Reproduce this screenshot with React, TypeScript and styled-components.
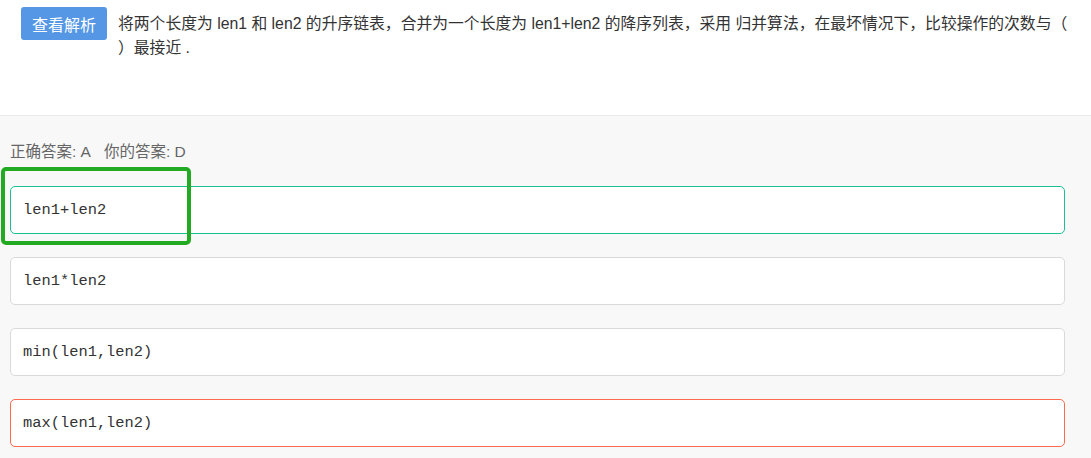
import React from 'react'
import styled, { createGlobalStyle } from 'styled-components'

const GlobalStyle = createGlobalStyle`
  html, body {
    margin: 0;
    padding: 0;
    background: #f8f8f8;
  }
  body {
    font-family: 'Liberation Sans', 'Noto Sans CJK SC', sans-serif;
    color: #333;
  }
`

const Page = styled.div`
  position: relative;
  width: 1091px;
  min-height: 458px;
  background: #f8f8f8;
`

const QuestionHeader = styled.div`
  display: flex;
  align-items: flex-start;
  gap: 11px;
  height: 116px;
  box-sizing: border-box;
  padding: 7px 22px 0 21px;
  background: #fff;
  border-bottom: 1px solid #ebebeb;
`

const AnalysisButton = styled.button`
  flex: none;
  width: 86px;
  height: 33px;
  padding: 0;
  border: none;
  border-radius: 3px;
  background: #5597e5;
  color: #fff;
  font-family: 'Liberation Sans', 'Noto Sans CJK SC', sans-serif;
  font-size: 16px;
  cursor: pointer;
`

const QuestionText = styled.div`
  flex: 1;
  font-size: 15.8px;
  line-height: 24px;
  padding-top: 5px;
  color: #333;
`

const AnswerSection = styled.div`
  display: flex;
  flex-direction: column;
  padding: 25px 26px 0 10px;
`

const AnswerLine = styled.div`
  font-size: 15.5px;
  line-height: 22px;
  color: #666;
  margin-bottom: 23px;

  span + span {
    margin-left: 13px;
  }
`

const OptionList = styled.div`
  display: flex;
  flex-direction: column;
  gap: 23px;
`

const Option = styled.div<{ borderColor: string }>`
  height: 48px;
  box-sizing: border-box;
  display: flex;
  align-items: center;
  padding: 0 12px;
  background: #fff;
  border: 1px solid ${({ borderColor }) => borderColor};
  border-radius: 5px;
  font-family: 'Liberation Mono', 'Courier New', monospace;
  font-size: 15.4px;
  color: #333;
`

const Highlight = styled.div`
  position: absolute;
  left: 1px;
  top: 167px;
  width: 190px;
  height: 78px;
  box-sizing: border-box;
  border: 4px solid #22ab22;
  border-radius: 5px;
  pointer-events: none;
`

const OPTIONS = [
  { text: 'len1+len2', color: '#1bbf93' },
  { text: 'len1*len2', color: '#d9d9d9' },
  { text: 'min(len1,len2)', color: '#d9d9d9' },
  { text: 'max(len1,len2)', color: '#ff6a4c' },
]

export default function App() {
  return (
    <Page>
      <GlobalStyle />
      <QuestionHeader>
        <AnalysisButton>查看解析</AnalysisButton>
        <QuestionText>
          将两个长度为 len1 和 len2 的升序链表，合并为一个长度为 len1+len2 的降序列表，采用 归并算法，在最坏情况下，比较操作的次数与（ ）最接近 .
        </QuestionText>
      </QuestionHeader>
      <AnswerSection>
        <AnswerLine>
          <span>正确答案: A</span>
          <span>你的答案: D</span>
        </AnswerLine>
        <OptionList>
          {OPTIONS.map((item) => (
            <Option key={item.text} borderColor={item.color}>
              {item.text}
            </Option>
          ))}
        </OptionList>
      </AnswerSection>
      <Highlight />
    </Page>
  )
}
